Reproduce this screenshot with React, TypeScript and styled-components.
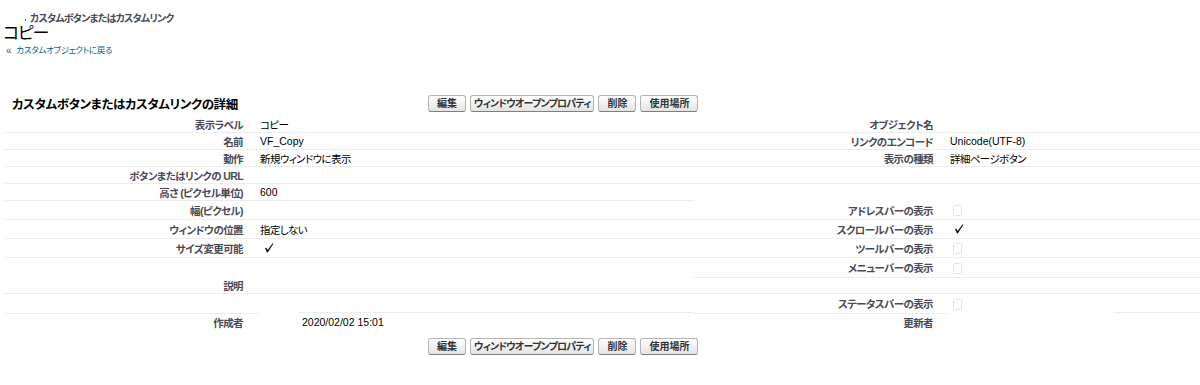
import React from 'react';
import styled, { createGlobalStyle } from 'styled-components';

const GlobalStyle = createGlobalStyle`
	body {
		margin: 0;
		background: #fff;
		color: #000;
		font-family: "Liberation Sans", "Noto Sans CJK JP", sans-serif;
		font-feature-settings: "palt";
	}
`;

const Page = styled.div`
	padding-top: 11px;
`;

const Breadcrumb = styled.div`
	display: flex;
	align-items: center;
	height: 12px;
	padding-left: 25px;
	font-size: 10px;
	font-weight: bold;
	color: #4a4a56;
	letter-spacing: -0.8px;
`;

const BrokenIcon = styled.span`
	width: 1px;
	height: 2px;
	margin: 5px 4px 0 0;
	background: #666;
`;

const Title = styled.h1`
	margin: 2px 0 0 3px;
	font-size: 17px;
	font-weight: normal;
	line-height: 18px;
	color: #000;
	letter-spacing: -1.2px;
`;

const BackLink = styled.div`
	display: flex;
	align-items: center;
	gap: 5px;
	margin: 2px 0 0 6px;
	font-size: 8.5px;
	line-height: 11px;
	color: #015ba7;
	letter-spacing: -0.3px;

	span {
		font-size: 10px;
		color: #555;
	}
`;

const Block = styled.div`
	margin: 35px 0 0 3px;
`;

const ButtonBar = styled.div<{ $bottom?: boolean }>`
	display: flex;
	align-items: center;
	height: 25px;
	margin-top: ${(p) => (p.$bottom ? '3px' : '0')};
`;

const SectionTitle = styled.h2`
	width: 416px;
	margin: 0;
	padding-left: 9px;
	font-size: 12.5px;
	font-weight: bold;
	color: #000;
	letter-spacing: -0.4px;
`;

const Spacer = styled.div`
	width: 425px;
`;

const Buttons = styled.div`
	display: flex;
	gap: 4px;
`;

const Btn = styled.button<{ $spaced?: boolean }>`
	height: 17px;
	padding: 0 ${(p) => (p.$spaced ? '8px' : '3px')};
	border: 1px solid #b5b5b5;
	border-bottom-color: #7f7f7f;
	border-radius: 3px;
	background: linear-gradient(#ffffff, #e3e3e3);
	font-family: inherit;
	font-feature-settings: "palt";
	font-size: 10px;
	font-weight: bold;
	line-height: 13px;
	letter-spacing: ${(p) => (p.$spaced ? '0' : '-0.8px')};
	color: #333;
`;

const Detail = styled.table`
	width: 100%;
	table-layout: fixed;
	border-collapse: separate;
	border-spacing: 0;
`;

const Row = styled.tr<{ $h: number }>`
	height: ${(p) => p.$h}px;
`;

type Rule = 'full' | 'none' | number;

const cellRule = (r: Rule | undefined) => {
	if (r === 'none') return 'border-bottom: 1px solid transparent;';
	if (typeof r === 'number')
		return `border-bottom: 1px solid transparent;
			background: linear-gradient(#ececec, #ececec) no-repeat ${r}px 100% / calc(100% - ${r}px) 1px;`;
	return 'border-bottom: 1px solid #ececec;';
};

const Label = styled.td<{ $rule?: Rule }>`
	box-sizing: border-box;
	padding: 0 15px 0 2px;
	text-align: right;
	vertical-align: middle;
	font-size: 10.5px;
	font-weight: bold;
	letter-spacing: -0.6px;
	color: #4a4a56;
	white-space: nowrap;
	${(p) => cellRule(p.$rule)}
`;

const Data = styled.td<{ $rule?: Rule; $indent?: number; $jp?: boolean }>`
	box-sizing: border-box;
	padding: 0 2px 0 ${(p) => 2 + (p.$indent ?? 0)}px;
	vertical-align: middle;
	font-size: 10.5px;
	letter-spacing: ${(p) => (p.$jp ? '-0.6px' : '0')};
	color: #000;
	white-space: nowrap;
	${(p) => cellRule(p.$rule)}
`;

const Box = styled.svg`
	display: block;
`;

function Check({ on }: { on: boolean }) {
	if (on)
		return (
			<Box width='14' height='12' viewBox='0 0 14 12'>
				<path d='M5 6.2 L6.3 5.6 L7.6 8 L12.6 1.2 L13.4 1.8 L7.8 10.6 L7 10.6 Z' fill='#111' />
			</Box>
		);
	return (
		<Box width='14' height='12' viewBox='0 0 14 12'>
			<rect x='3.5' y='1.5' width='8' height='10' rx='1' fill='#fff' stroke='#e2e2e2' />
		</Box>
	);
}

const ActionButtons = () => (
	<Buttons>
		<Btn $spaced>編集</Btn>
		<Btn>ウィンドウオープンプロパティ</Btn>
		<Btn $spaced>削除</Btn>
		<Btn $spaced>使用場所</Btn>
	</Buttons>
);

export default function App() {
	return (
		<>
			<GlobalStyle />
			<Page>
				<Breadcrumb>
					<BrokenIcon />
					カスタムボタンまたはカスタムリンク
				</Breadcrumb>
				<Title>コピー</Title>
				<BackLink>
					<span>«</span>
					カスタムオブジェクトに戻る
				</BackLink>

				<Block>
					<ButtonBar>
						<SectionTitle>カスタムボタンまたはカスタムリンクの詳細</SectionTitle>
						<ActionButtons />
					</ButtonBar>

					<Detail>
						<colgroup>
							<col style={{ width: 255 }} />
							<col style={{ width: 436 }} />
							<col style={{ width: 254 }} />
							<col />
						</colgroup>
						<tbody>
							<Row $h={17}>
								<Label>表示ラベル</Label>
								<Data $jp>コピー</Data>
								<Label>オブジェクト名</Label>
								<Data />
							</Row>
							<Row $h={17}>
								<Label>名前</Label>
								<Data>VF_Copy</Data>
								<Label>リンクのエンコード</Label>
								<Data>Unicode(UTF-8)</Data>
							</Row>
							<Row $h={17}>
								<Label>動作</Label>
								<Data $jp>新規ウィンドウに表示</Data>
								<Label>表示の種類</Label>
								<Data $jp>詳細ページボタン</Data>
							</Row>
							<Row $h={17}>
								<Label>ボタンまたはリンクの URL</Label>
								<Data />
								<Label />
								<Data />
							</Row>
							<Row $h={17}>
								<Label>高さ (ピクセル単位)</Label>
								<Data>600</Data>
								<Label $rule='none' />
								<Data $rule='none' />
							</Row>
							<Row $h={19}>
								<Label>幅(ピクセル)</Label>
								<Data />
								<Label>アドレスバーの表示</Label>
								<Data>
									<Check on={false} />
								</Data>
							</Row>
							<Row $h={19}>
								<Label>ウィンドウの位置</Label>
								<Data $jp>指定しない</Data>
								<Label>スクロールバーの表示</Label>
								<Data>
									<Check on />
								</Data>
							</Row>
							<Row $h={19}>
								<Label>サイズ変更可能</Label>
								<Data>
									<Check on />
								</Data>
								<Label>ツールバーの表示</Label>
								<Data>
									<Check on={false} />
								</Data>
							</Row>
							<Row $h={20}>
								<Label $rule='none' />
								<Data $rule='none' />
								<Label>メニューバーの表示</Label>
								<Data>
									<Check on={false} />
								</Data>
							</Row>
							<Row $h={15}>
								<Label>説明</Label>
								<Data />
								<Label />
								<Data />
							</Row>
							<Row $h={20}>
								<Label />
								<Data $rule={41} />
								<Label>ステータスバーの表示</Label>
								<Data $rule={166}>
									<Check on={false} />
								</Data>
							</Row>
							<Row $h={17}>
								<Label $rule='none'>作成者</Label>
								<Data $rule='none' $indent={42}>
									2020/02/02 15:01
								</Data>
								<Label $rule='none'>更新者</Label>
								<Data $rule='none' />
							</Row>
						</tbody>
					</Detail>

					<ButtonBar $bottom>
						<Spacer />
						<ActionButtons />
					</ButtonBar>
				</Block>
			</Page>
		</>
	);
}
